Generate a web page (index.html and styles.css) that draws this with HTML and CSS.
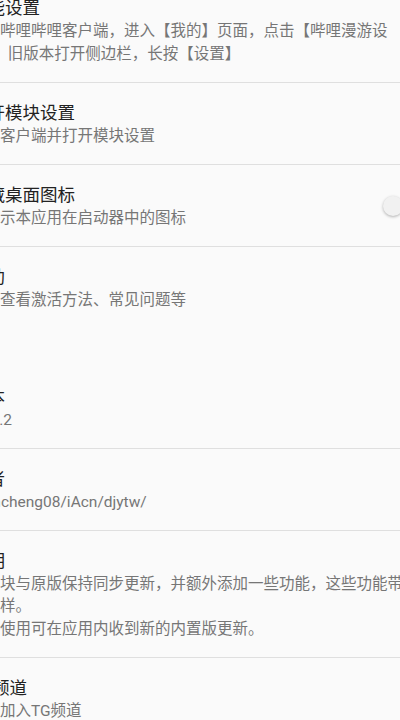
FILE: index.html
```html
<!DOCTYPE html>
<html>
<head>
    <title>设置</title>
    <meta name="viewport" content="width=device-width, initial-scale=1.0">
    <link rel="stylesheet" href="styles.css">
</head>
<body>
    <div class="prefs">
        <div class="pref">
            <div class="pref-text">
                <div class="pref-title">功能设置</div>
                <div class="pref-summary">打开哔哩哔哩客户端，进入【我的】页面，点击【哔哩漫游设<br>置】；旧版本打开侧边栏，长按【设置】</div>
            </div>
        </div>
        <div class="pref">
            <div class="pref-text">
                <div class="pref-title">打开模块设置</div>
                <div class="pref-summary">启动客户端并打开模块设置</div>
            </div>
        </div>
        <div class="pref">
            <div class="pref-text">
                <div class="pref-title">隐藏桌面图标</div>
                <div class="pref-summary">不显示本应用在启动器中的图标</div>
            </div>
            <div class="switch">
                <div class="switch-track"></div>
                <div class="switch-thumb"></div>
            </div>
        </div>
        <div class="pref last">
            <div class="pref-text">
                <div class="pref-title">帮助</div>
                <div class="pref-summary">点击查看激活方法、常见问题等</div>
            </div>
        </div>

        <div class="category">关于</div>

        <div class="pref">
            <div class="pref-text">
                <div class="pref-title">版本</div>
                <div class="pref-summary">1.10.2</div>
            </div>
        </div>
        <div class="pref">
            <div class="pref-text">
                <div class="pref-title">作者</div>
                <div class="pref-summary">yujincheng08/iAcn/djytw/</div>
            </div>
        </div>
        <div class="pref">
            <div class="pref-text">
                <div class="pref-title">说明</div>
                <div class="pref-summary">本模块与原版保持同步更新，并额外添加一些功能，这些功能带有标识<br>的字样。<br>正常使用可在应用内收到新的内置版更新。</div>
            </div>
        </div>
        <div class="pref last">
            <div class="pref-text">
                <div class="pref-title">TG频道</div>
                <div class="pref-summary">点击加入TG频道</div>
            </div>
        </div>
    </div>
</body>
</html>
```

FILE: styles.css
```css
html, body {
    margin: 0;
    padding: 0;
}
body {
    width: 400px;
    height: 720px;
    overflow: hidden;
    background: #fafafa;
    font-family: Roboto, "Noto Sans CJK SC", sans-serif;
}
/* the screenshot is a crop of a wider, scrolled list */
.prefs {
    width: 460px;
    margin: -22px 0 0 -30px;
}
.pref {
    display: flex;
    align-items: center;
    padding: 19px 10px 16.5px 0;
    border-bottom: 1px solid #dfdfdf;
}
.pref.last {
    border-bottom: none;
}
.pref-text {
    flex: 1;
    min-width: 0;
}
.pref-title {
    font-size: 17.5px;
    line-height: 23px;
    color: #222;
    white-space: nowrap;
}
.pref-summary {
    margin-left: -1px;
    font-size: 15.5px;
    line-height: 22.5px;
    color: #767676;
    white-space: nowrap;
}
.category {
    height: 39px;
    line-height: 39px;
    font-size: 14px;
    color: #fb7299;
    white-space: nowrap;
}
.switch {
    position: relative;
    width: 37px;
    height: 20px;
    flex-shrink: 0;
}
.switch-track {
    position: absolute;
    left: 3px;
    top: 3px;
    width: 34px;
    height: 14px;
    border-radius: 7px;
    background: rgba(0, 0, 0, 0.26);
}
.switch-thumb {
    position: absolute;
    left: 0;
    top: 0;
    width: 20px;
    height: 20px;
    border-radius: 50%;
    background: #f1f1f1;
    box-shadow: 0 1px 3px rgba(0, 0, 0, 0.3);
}
```
